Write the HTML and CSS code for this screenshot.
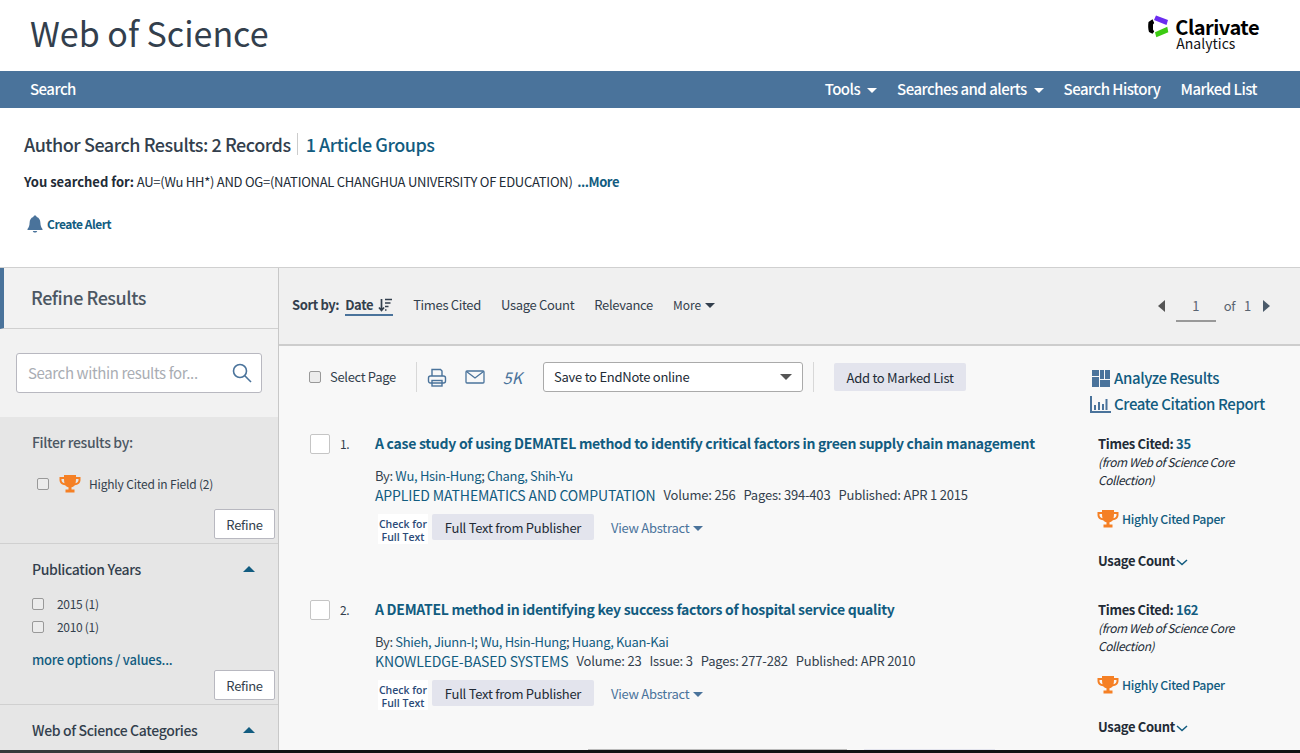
FILE: index.html
```html
<!DOCTYPE html>
<html lang="en">
<head>
  <meta charset="UTF-8" />
  <meta name="viewport" content="width=device-width, initial-scale=1.0" />
  <title>Web of Science</title>
  <link rel="stylesheet" href="styles.css">
</head>
<body>
  <header class="top">
    <div class="brand">Web of Science</div>
    <div class="logo">
      <svg class="logo-mark" width="22" height="24" viewBox="0 0 22 24">
        <path d="M8 .6L20 5L18.500 10L6 5z" fill="#6a2cf0"/>
        <path d="M.5 7L4.500 4.300L6.200 8L5 9.500V14.500L6.200 16.500L4.500 18.800L1 17C0 14 0 10 .5 7z" fill="#000"/>
        <path d="M7 17.300L19.300 11.700L20.300 17.300L8.300 22.300z" fill="#3ccb12"/>
      </svg>
      <div class="logo-text">
        <div class="logo-name">Clarivate</div>
        <div class="logo-sub">Analytics</div>
      </div>
    </div>
  </header>

  <nav class="nav">
    <a>Search</a>
    <div class="nav-right">
      <a>Tools <i class="caret white"></i></a>
      <a>Searches and alerts <i class="caret white"></i></a>
      <a>Search History</a>
      <a>Marked List</a>
    </div>
  </nav>

  <section class="summary">
    <div class="summary-title">
      <h1>Author Search Results: 2 Records</h1>
      <a class="groups">1 Article Groups</a>
    </div>
    <p class="query"><b>You searched for:</b> AU=(Wu HH*) AND OG=(NATIONAL CHANGHUA UNIVERSITY OF EDUCATION) <a>...More</a></p>
    <a class="alert">
      <svg width="18" height="18" viewBox="0 0 18 18"><path d="M9 0.5c1 0 1.600.6 1.700 1.600 2.500.8 3.600 3 3.700 5.600.1 3 .7 4.500 2.100 6.300v1H1.500v-1c1.400-1.800 2-3.300 2.100-6.300.1-2.600 1.200-4.800 3.700-5.600C7.400 1.100 8 .5 9 .5zM6.800 16h4.400c-.3 1-1.100 1.600-2.200 1.600S7.100 17 6.800 16z" fill="#4a739b"/></svg>
      Create Alert
    </a>
  </section>

  <div class="main">
    <aside class="side">
      <div class="side-head">Refine Results</div>
      <div class="side-search">
        <div class="search-box">
          <span>Search within results for...</span>
          <svg width="20" height="20" viewBox="0 0 20 20" fill="none" stroke="#4a739b" stroke-width="1.600"><circle cx="8" cy="8" r="6.500"/><path d="M12.800 12.800 L19 19"/></svg>
        </div>
      </div>
      <div class="facet facet-first">
        <div class="facet-title">Filter results by:</div>
        <label class="hc-row">
          <span class="check"></span>
          <svg class="trophy" width="22" height="18" viewBox="0 0 22 18"><use href="#trophy"/></svg>
          Highly Cited in Field (2)
        </label>
        <div class="refine-row"><button class="refine">Refine</button></div>
      </div>
      <div class="facet">
        <div class="facet-head"><span class="facet-title">Publication Years</span><i class="caret-up"></i></div>
        <label class="year"><span class="check"></span>2015 (1)</label>
        <label class="year"><span class="check"></span>2010 (1)</label>
        <a class="more-opts">more options / values...</a>
        <div class="refine-row"><button class="refine">Refine</button></div>
      </div>
      <div class="facet facet-last">
        <div class="facet-head"><span class="facet-title">Web of Science Categories</span><i class="caret-up"></i></div>
      </div>
    </aside>

    <main class="content">
      <div class="sortbar">
        <b class="sort-label">Sort by:</b>
        <span class="sort-date">Date
          <svg width="15" height="14" viewBox="0 0 15 14" fill="none" stroke="#333f4d" stroke-width="1.700"><path d="M3.500 1V12M1 9.500L3.500 12.500L6 9.500"/><path d="M7 1.500H14M7 5H12.500M7 8.500H10.500M7 12H8.500"/></svg>
        </span>
        <span class="sort-opt">Times Cited</span>
        <span class="sort-opt">Usage Count</span>
        <span class="sort-opt">Relevance</span>
        <span class="sort-more">More <i class="caret dark"></i></span>
        <div class="pager">
          <i class="arrow-left"></i>
          <span class="page-num">1</span>
          <span class="page-of">of</span>
          <span class="page-total">1</span>
          <i class="arrow-right"></i>
        </div>
      </div>

      <div class="toolbar">
        <label class="select-page"><span class="check"></span>Select Page</label>
        <span class="tool-sep"></span>
        <svg class="tool-icon" width="20" height="20" viewBox="0 0 20 20" fill="none" stroke="#4a739b" stroke-width="1.400"><path d="M5 8V1.500H13.500L15 3V8"/><rect x="1.500" y="8" width="17" height="7" rx="2"/><rect x="5" y="12.500" width="10" height="5.500"/></svg>
        <svg class="tool-icon mail" width="20" height="16" viewBox="0 0 20 16" fill="none" stroke="#4a739b" stroke-width="1.300"><rect x="1" y="2" width="18" height="12" rx="1"/><path d="M1.500 2.500L10 9L18.500 2.500"/></svg>
        <span class="five-k">5K</span>
        <div class="save-select">Save to EndNote online<i class="caret gray"></i></div>
        <span class="tool-sep sep2"></span>
        <button class="btn-mark">Add to Marked List</button>
        <div class="analysis">
          <a><svg width="18" height="17" viewBox="0 0 18 17" fill="#4a739b"><path d="M0 0H7V6H0zM0 7H7V17H0zM8 0H12V9H8zM13 0H18V9H13zM8 10H18V17H8z"/></svg>Analyze Results</a>
          <a class="citation"><svg width="21" height="17" viewBox="0 0 21 17" fill="#4a739b"><path d="M0 0H2V15H21V17H0zM4 9H6V14H4zM8 6H10V14H8zM12 8H14V14H12zM15.500 3H17.500V14H15.500z"/></svg>Create Citation Report</a>
        </div>
      </div>

      <article class="record">
        <div class="rec-main">
          <div class="rec-title-row">
            <span class="rec-check"></span>
            <span class="rec-num">1.</span>
            <a class="rec-title">A case study of using DEMATEL method to identify critical factors in green supply chain management</a>
          </div>
          <div class="rec-body">
            <div class="rec-by">By: <a>Wu, Hsin-Hung</a>; <a>Chang, Shih-Yu</a></div>
            <div class="rec-src"><a class="journal">APPLIED MATHEMATICS AND COMPUTATION</a><span>Volume: 256</span><span>Pages: 394-403</span><span>Published: APR 1 2015</span></div>
            <div class="rec-links">
              <span class="check-ft">Check for<br>Full Text</span>
              <button class="btn-ft">Full Text from Publisher</button>
              <a class="view-abs">View Abstract <i class="caret blue"></i></a>
            </div>
          </div>
        </div>
        <div class="rec-side">
          <div class="cited"><b>Times Cited:</b> <a>35</a></div>
          <div class="cited-note">(from Web of Science Core Collection)</div>
          <div class="hc-paper"><svg width="22" height="18" viewBox="0 0 22 18"><use href="#trophy"/></svg>Highly Cited Paper</div>
          <div class="usage">Usage Count <svg width="12" height="7" viewBox="0 0 12 7" fill="none" stroke="#125c80" stroke-width="1.500"><path d="M1 1L6 5.500L11 1"/></svg></div>
        </div>
      </article>

      <article class="record">
        <div class="rec-main">
          <div class="rec-title-row">
            <span class="rec-check"></span>
            <span class="rec-num">2.</span>
            <a class="rec-title">A DEMATEL method in identifying key success factors of hospital service quality</a>
          </div>
          <div class="rec-body">
            <div class="rec-by">By: <a>Shieh, Jiunn-I</a>; <a>Wu, Hsin-Hung</a>; <a>Huang, Kuan-Kai</a></div>
            <div class="rec-src"><a class="journal">KNOWLEDGE-BASED SYSTEMS</a><span>Volume: 23</span><span>Issue: 3</span><span>Pages: 277-282</span><span>Published: APR 2010</span></div>
            <div class="rec-links">
              <span class="check-ft">Check for<br>Full Text</span>
              <button class="btn-ft">Full Text from Publisher</button>
              <a class="view-abs">View Abstract <i class="caret blue"></i></a>
            </div>
          </div>
        </div>
        <div class="rec-side">
          <div class="cited"><b>Times Cited:</b> <a>162</a></div>
          <div class="cited-note">(from Web of Science Core Collection)</div>
          <div class="hc-paper"><svg width="22" height="18" viewBox="0 0 22 18"><use href="#trophy"/></svg>Highly Cited Paper</div>
          <div class="usage">Usage Count <svg width="12" height="7" viewBox="0 0 12 7" fill="none" stroke="#125c80" stroke-width="1.500"><path d="M1 1L6 5.500L11 1"/></svg></div>
        </div>
      </article>
    </main>
  </div>

  <div class="bottom-strip">
    <span class="strip-left"></span>
    <span class="strip-box"></span>
    <span class="strip-btn"></span>
  </div>

  <svg class="defs" width="0" height="0">
    <symbol id="trophy" viewBox="0 0 22 18">
      <path fill="#f58025" d="M5 0H17V2H21.500V5C21.500 8 19 10 15.800 10.300C15 11.300 14 12 12.500 12.300V14.500H15.500V17.500H6.500V14.500H9.500V12.300C8 12 7 11.300 6.200 10.300C3 10 .5 8 .5 5V2H5zM2.500 4V5C2.500 6.500 3.500 7.800 5.500 8.200C5.200 7 5 5.500 5 4zM19.500 4H17C17 5.500 16.800 7 16.500 8.200C18.500 7.800 19.500 6.500 19.500 5z"/>
    </symbol>
  </svg>
</body>
</html>
```

FILE: styles.css
```css
html, body {
  height: 753px;
  overflow: hidden;
}
* {
  letter-spacing: -0.025em;
}
body {
  margin: 0;
  font-family: "Noto Sans CJK SC", "Noto Sans", sans-serif;
  font-size: 13px;
  line-height: 18px;
  color: #333f4d;
  background: #fff;
}
a {
  color: #125c80;
  cursor: pointer;
}
button {
  font-family: inherit;
  cursor: pointer;
}
.defs {
  position: absolute;
}

/* header */
.top {
  height: 71px;
  display: flex;
  justify-content: space-between;
  padding: 0 41px 0 30px;
}
.brand {
  font-size: 34px;
  letter-spacing: 0;
  line-height: 66px;
  color: #333f4d;
}
.logo {
  display: flex;
  padding-top: 17px;
}
.logo-mark {
  margin: -2px 5px 0 0;
}
.logo-name {
  font-size: 20px;
  font-weight: 700;
  line-height: 20px;
  color: #000;
}
.logo-sub {
  font-size: 14px;
  letter-spacing: 0;
  line-height: 13px;
  color: #111;
  margin-left: 1px;
}

.nav {
  height: 37px;
  background: #4a739b;
  display: flex;
  justify-content: space-between;
  align-items: center;
  padding: 0 43px 2px 30px;
  box-sizing: border-box;
  font-size: 15px;
  font-weight: 500;
}
.nav a {
  color: #fff;
  letter-spacing: -0.035em;
}
.nav-right {
  display: flex;
  gap: 20px;
}
.caret {
  display: inline-block;
  border-left: 5px solid transparent;
  border-right: 5px solid transparent;
  border-top: 5px solid #fff;
  margin-left: 3px;
  vertical-align: 2px;
}
.caret.white {
  margin-left: 4px;
}
.caret.dark {
  border-top-color: #333f4d;
}
.caret.blue {
  border-top-color: #4a739b;
  margin-left: 1px;
}
.caret.gray {
  border-top-color: #555;
  border-left-width: 6px;
  border-right-width: 6px;
  border-top-width: 6px;
  margin-left: auto;
}

/* summary */
.summary {
  height: 160px;
  box-sizing: border-box;
  padding: 25px 24px 0;
  border-bottom: 1px solid #d0d0d0;
}
.summary-title {
  display: flex;
  align-items: center;
  height: 22px;
}
.summary-title h1 {
  margin: 0;
  font-size: 18px;
  font-weight: 500;
  line-height: 22px;
  padding-right: 6px;
  border-right: 1px solid #ccc;
}
.groups {
  font-size: 18px;
  font-weight: 500;
  margin-left: 8px;
}
.query {
  margin: 17px 0 0;
  height: 20px;
  line-height: 20px;
  color: #222b36;
  letter-spacing: -0.02em;
}
.query b {
  font-weight: 700;
  letter-spacing: 0;
}
.query a {
  font-weight: 700;
  margin-left: 2px;
  letter-spacing: -0.035em;
}
.alert {
  display: flex;
  align-items: center;
  gap: 3px;
  margin: 21px 0 0 2px;
  font-size: 12px;
  font-weight: 600;
  letter-spacing: -0.04em;
  height: 22px;
}

/* layout */
.main {
  display: flex;
  height: 485px;
  overflow: hidden;
}
.side {
  width: 278px;
  flex: none;
  display: flex;
  flex-direction: column;
  background: #f2f2f2;
  border-right: 1px solid #c8c8c8;
}
.side-head {
  height: 61px;
  box-sizing: border-box;
  border-left: 4px solid #4a739b;
  border-bottom: 1px solid #d0d0d0;
  padding-left: 27px;
  line-height: 58px;
  font-size: 18px;
  font-weight: 500;
  color: #4c5763;
}
.side-search {
  height: 88px;
  box-sizing: border-box;
  padding: 24px 16px 0;
}
.search-box {
  height: 40px;
  box-sizing: border-box;
  width: 246px;
  background: #fff;
  border: 1px solid #b8b8c0;
  border-radius: 3px;
  display: flex;
  align-items: center;
  justify-content: space-between;
  padding: 0 9px 0 11px;
  font-size: 15px;
  color: #a9adb3;
}
.facet {
  background: #e6e6e6;
  border-bottom: 1px solid #d0d0d0;
  padding: 0 3px 0 32px;
}
.facet-first {
  height: 127px;
  box-sizing: border-box;
  padding-top: 16px;
}
.facet-last {
  flex: 1;
  border-bottom: none;
}
.facet-title {
  font-size: 14px;
  font-weight: 500;
  line-height: 18px;
  color: #333f4d;
}
.facet-first .facet-title {
  color: #4c5763;
}
.facet-head {
  display: flex;
  justify-content: space-between;
  align-items: center;
  padding: 16px 20px 0 0;
}
.caret-up {
  border-left: 6px solid transparent;
  border-right: 6px solid transparent;
  border-bottom: 6px solid #125c80;
}
.check {
  width: 10px;
  height: 10px;
  flex: none;
  background: #ececec;
  border: 1px solid #999;
  border-radius: 2px;
  display: inline-block;
}
.hc-row {
  display: flex;
  align-items: center;
  margin: 23px 0 0 5px;
  height: 20px;
  font-size: 12px;
  letter-spacing: -0.015em;
}
.trophy {
  margin: 0 8px 0 10px;
}
.refine-row {
  display: flex;
  justify-content: flex-end;
}
.refine {
  width: 61px;
  height: 30px;
  padding: 0;
  background: #fff;
  border: 1px solid #b8b8c0;
  border-radius: 2px;
  font-size: 13px;
  color: #333f4d;
}
.facet-first .refine-row {
  margin-top: 15px;
}
.year {
  display: flex;
  align-items: center;
  gap: 13px;
  font-size: 12px;
  height: 23px;
}
.facet-head + .year {
  margin-top: 14px;
}
.more-opts {
  display: block;
  margin-top: 13px;
  font-weight: 500;
  letter-spacing: -0.015em;
}
.facet .more-opts + .refine-row {
  margin-top: 1px;
  padding-bottom: 4px;
}

/* results */
.content {
  flex: 1;
  background: #f8f8f8;
}
.sortbar {
  height: 78px;
  box-sizing: border-box;
  background: #f0f0f0;
  border-bottom: 2px solid #cdcdcd;
  display: flex;
  align-items: flex-start;
  padding: 28px 30px 0 13px;
  color: #333f4d;
}
.sort-label {
  font-weight: 600;
  margin-right: 6px;
  letter-spacing: -0.03em;
}
.sort-date {
  font-weight: 600;
  letter-spacing: -0.03em;
  border-bottom: 2px solid #4a739b;
  height: 18px;
  line-height: 18px;
  margin-right: 20px;
  display: flex;
  align-items: center;
  gap: 5px;
}
.sort-opt {
  margin-right: 20px;
}
.sort-more {
  font-size: 12px;
  letter-spacing: 0;
}
.sort-more .caret {
  margin-left: 1px;
}
.pager {
  margin-left: auto;
  display: flex;
  align-items: center;
  height: 20px;
  color: #5a6470;
}
.arrow-left {
  border-top: 6px solid transparent;
  border-bottom: 6px solid transparent;
  border-right: 7px solid #555;
}
.arrow-right {
  border-top: 6px solid transparent;
  border-bottom: 6px solid transparent;
  border-left: 7px solid #4a5a6a;
}
.page-num {
  width: 40px;
  text-align: center;
  margin-left: 11px;
  height: 26px;
  line-height: 20px;
  box-sizing: border-box;
  border-bottom: 2px solid #999;
  margin-top: 6px;
}
.page-of {
  margin-left: 8px;
}
.page-total {
  margin: 0 12px 0 9px;
}

.toolbar {
  height: 88px;
  display: flex;
  align-items: flex-start;
  padding: 16px 34px 0 30px;
  box-sizing: border-box;
}
.select-page {
  display: flex;
  align-items: center;
  gap: 9px;
  height: 30px;
  color: #333f4d;
}
.tool-sep {
  width: 1px;
  height: 30px;
  background: #d8d8d8;
  margin: 0 10px 0 20px;
}
.tool-icon {
  margin-top: 6px;
}
.tool-icon.mail {
  margin: 7px 0 0 18px;
}
.five-k {
  font-size: 16px;
  font-style: italic;
  letter-spacing: 0;
  color: #4a739b;
  margin: 6px 0 0 18px;
  line-height: 18px;
}
.save-select {
  width: 260px;
  height: 30px;
  box-sizing: border-box;
  margin-left: 21px;
  background: #fff;
  border: 1px solid #aaa;
  border-radius: 3px;
  display: flex;
  align-items: center;
  padding: 0 10px;
  color: #222b36;
  letter-spacing: -0.02em;
}
.sep2 {
  margin: 0 20px 0 10px;
}
.btn-mark,
.btn-ft {
  height: 28px;
  padding: 0;
  background: #e3e4ed;
  border: none;
  border-radius: 2px;
  font-size: 13px;
  letter-spacing: -0.02em;
  color: #222b36;
}
.btn-mark {
  margin-top: 1px;
  width: 132px;
}
.btn-ft {
  height: 26px;
  width: 162px;
}
.analysis {
  margin-left: auto;
  margin-top: 3px;
  width: 176px;
  font-size: 15px;
  font-weight: 500;
  line-height: 26px;
  white-space: nowrap;
}
.analysis a {
  display: flex;
  align-items: center;
  gap: 4px;
  margin-left: 2px;
}
.analysis svg {
  flex: none;
}
.analysis .citation {
  margin-left: 0;
  gap: 3px;
}

.record {
  height: 166px;
  box-sizing: border-box;
  display: flex;
  padding-left: 31px;
}
.rec-main {
  width: 788px;
  flex: none;
}
.rec-title-row {
  display: flex;
  align-items: center;
  height: 20px;
}
.rec-check {
  width: 18px;
  height: 18px;
  background: #fff;
  border: 1px solid #c5c5c5;
  border-radius: 2px;
  flex: none;
}
.rec-num {
  width: 35px;
  flex: none;
  margin-left: 10px;
  font-size: 12px;
}
.rec-title {
  font-size: 14px;
  font-weight: 700;
  letter-spacing: -0.02em;
  white-space: nowrap;
  padding-bottom: 2px;
}
.rec-body {
  margin-left: 65px;
  padding-top: 12px;
}
.rec-by {
  line-height: 20px;
}
.rec-src {
  display: flex;
  gap: 8px;
  line-height: 20px;
  margin-top: -1px;
}
.rec-src span {
  letter-spacing: -0.015em;
}
.journal {
  font-size: 14px;
  letter-spacing: -0.01em;
}
.rec-links {
  display: flex;
  align-items: flex-start;
  margin-top: 9px;
}
.check-ft {
  width: 50px;
  margin-left: 3px;
  background: #fff;
  text-align: center;
  font-family: "Open Sans", sans-serif;
  font-size: 10.500px;
  font-weight: 600;
  letter-spacing: 0;
  line-height: 13px;
  padding: 4px 0 0;
  color: #2b4a78;
  margin-right: 4px;
}
.view-abs {
  margin-left: 17px;
  color: #4a739b;
  line-height: 27px;
  letter-spacing: -0.02em;
}
.rec-side {
  width: 170px;
  color: #222b36;
}
.cited {
  line-height: 20px;
  margin-bottom: -1px;
}
.cited b,
.usage {
  font-weight: 600;
}
.cited a {
  font-weight: 600;
}
.cited-note {
  font-style: italic;
  font-size: 12px;
  letter-spacing: -0.035em;
  line-height: 18px;
}
.hc-paper {
  display: flex;
  align-items: center;
  gap: 3px;
  margin: 21px 0 0 -1px;
  color: #125c80;
  font-weight: 500;
  font-size: 12.300px;
}
.usage {
  margin-top: 24px;
}
.usage svg {
  margin-left: -2px;
}

/* dark strip cut off at the bottom of the window */
.bottom-strip {
  position: absolute;
  left: 0;
  top: 749px;
  width: 1300px;
  height: 4px;
  display: flex;
  background: linear-gradient(transparent 1px, #111 1px);
}
.strip-left {
  width: 140px;
  margin-top: 1px;
  background: #3a3a3a;
}
.strip-box {
  width: 259px;
  margin-left: 448px;
  border-top: 1px solid #bbb;
}
.strip-btn {
  width: 131px;
  margin-left: 17px;
  border-top: 1px solid #e3e4ed;
}
```
